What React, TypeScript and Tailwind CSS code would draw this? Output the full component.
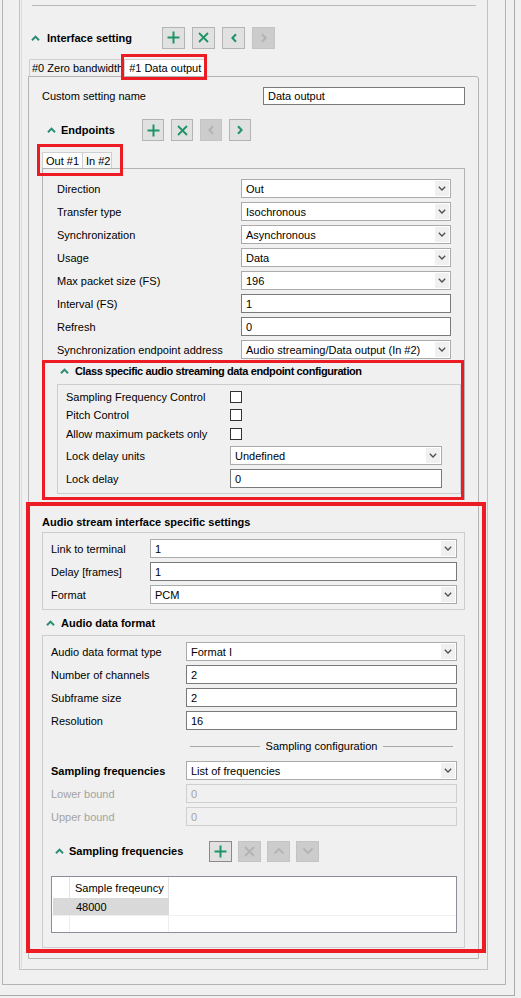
import React from "react";

// green used by tool button glyphs and collapse carets
const GREEN = "#1f9468";

const Caret = () => (
  <svg width="9" height="6" viewBox="0 0 9 6" className="shrink-0">
    <path d="M1 5.2 L4.5 1.6 L8 5.2" fill="none" stroke="#2a8c73" strokeWidth="2" />
  </svg>
);

type IconName = "plus" | "x" | "left" | "right" | "up" | "down";

const Glyph = ({ name, color }: { name: IconName; color: string }) => {
  if (name === "plus")
    return (
      <svg width="13" height="13" viewBox="0 0 13 13">
        <path d="M6.5 0.5v12M0.5 6.5h12" stroke={color} strokeWidth="2" />
      </svg>
    );
  if (name === "x")
    return (
      <svg width="11" height="11" viewBox="0 0 11 11">
        <path d="M1 1l9 9M10 1l-9 9" stroke={color} strokeWidth="1.8" />
      </svg>
    );
  if (name === "left")
    return (
      <svg width="8" height="10" viewBox="0 0 8 10">
        <path d="M6 1.2L2.4 5L6 8.8" fill="none" stroke={color} strokeWidth="2" />
      </svg>
    );
  if (name === "right")
    return (
      <svg width="8" height="10" viewBox="0 0 8 10">
        <path d="M2 1.2L5.6 5L2 8.8" fill="none" stroke={color} strokeWidth="2" />
      </svg>
    );
  if (name === "up")
    return (
      <svg width="12" height="8" viewBox="0 0 12 8">
        <path d="M1.5 6.5L6 2L10.5 6.5" fill="none" stroke={color} strokeWidth="1.8" />
      </svg>
    );
  return (
    <svg width="12" height="8" viewBox="0 0 12 8">
      <path d="M1.5 1.5L6 6L10.5 1.5" fill="none" stroke={color} strokeWidth="1.8" />
    </svg>
  );
};

interface toolProps {
  icon: IconName;
  disabled?: boolean;
  focused?: boolean;
  size: string; //w/h classes
}

const ToolButton = ({ icon, disabled, focused, size }: toolProps) => (
  <div
    className={
      size +
      " flex items-center justify-center border " +
      (disabled
        ? "border-[#c4c4c4] bg-[#cccccc]"
        : focused
        ? "border-[#8a8a8a] bg-[#e1e1e1]"
        : "border-[#b4b4b4] bg-[#e1e1e1]")
    }
  >
    <Glyph name={icon} color={disabled ? "#b3b3b3" : GREEN} />
  </div>
);

const Select = ({ value }: { value: string }) => (
  <div className="flex h-full flex-1 items-center border border-[#ababab] bg-white">
    <span className="flex-1 truncate pl-[4px]">{value}</span>
    <div className="mr-[1px] flex h-[15px] w-[14px] items-center justify-center bg-[#f0f0f0]">
      <svg width="8" height="5" viewBox="0 0 8 5">
        <path d="M0.8 0.8L4 4L7.2 0.8" fill="none" stroke="#4d4d4d" strokeWidth="1.3" />
      </svg>
    </div>
  </div>
);

const Field = ({ value, disabled }: { value: string; disabled?: boolean }) => (
  <div
    className={
      "flex h-full flex-1 items-center border pl-[4px] " +
      (disabled ? "border-[#cfcfcf] bg-[#f0f0f0] text-[#a3a3a3]" : "border-[#7a7a7a] bg-white")
    }
  >
    {value}
  </div>
);

const Checkbox = () => <div className="h-[12px] w-[12px] border border-[#333333] bg-white" />;

interface rowProps {
  label: string;
  labelW: string;
  children: React.ReactNode;
  bold?: boolean;
  muted?: boolean;
  h?: string;
}

const Row = ({ label, labelW, children, bold, muted, h }: rowProps) => (
  <div className={"flex items-center " + (h ?? "h-[19px]")}>
    <div className={labelW + " shrink-0 " + (bold ? "font-bold " : "") + (muted ? "text-[#a3a3a3]" : "")}>
      {label}
    </div>
    {children}
  </div>
);

const App = () => {
  const endpointRows: [string, string, boolean][] = [
    ["Direction", "Out", true],
    ["Transfer type", "Isochronous", true],
    ["Synchronization", "Asynchronous", true],
    ["Usage", "Data", true],
    ["Max packet size (FS)", "196", true],
    ["Interval (FS)", "1", false],
    ["Refresh", "0", false],
    ["Synchronization endpoint address", "Audio streaming/Data output (In #2)", true],
  ];

  return (
    <div className="relative h-[998px] w-[521px] overflow-hidden bg-[#f0f0f0] font-['Liberation_Sans',Arial,sans-serif] text-[11px] leading-[14px] text-black">
      <div className="h-[996px] w-[515px] border-r border-b border-[#a9a9a9]">
        <div className="ml-[2px] h-[985px] w-[504px] border-x border-b border-[#b4b4b4]">
          <div className="ml-[16px] h-[970px] w-[469px] border-x border-b border-[#c2c2c2]">
            <div className="ml-[1px] h-[968px] w-[466px] border-l border-[#dcdcdc]">
              {/* bottom edge of the group above, scrolled away */}
              <div className="ml-[10px] h-[6px] w-[444px] border-b border-[#b9b9b9]" />

              {/* Interface setting header */}
              <div className="mt-[20px] flex h-[23px] items-center pl-[9px]">
                <div className="flex w-[131px] items-center gap-[7px] font-bold">
                  <Caret />
                  Interface setting
                </div>
                <div className="flex gap-[7px]">
                  <ToolButton icon="plus" size="w-[23px] h-[22px]" />
                  <ToolButton icon="x" size="w-[23px] h-[22px]" />
                  <ToolButton icon="left" size="w-[23px] h-[22px]" />
                  <ToolButton icon="right" disabled size="w-[23px] h-[22px]" />
                </div>
              </div>

              {/* interface tabs */}
              <div className="ml-[6px] mt-[10px] w-[451px]">
                <div className="flex h-[17px] items-end pl-[1px]">
                  <div className="flex h-[17px] items-center rounded-tl-[2px] border-t border-l border-[#cfcfcf] bg-[#f0f0f0] pl-[2px] pr-[1px]">
                    #0 Zero bandwidth
                  </div>
                  <div className="flex h-[17px] items-center border-x border-t border-[#cfcfcf] bg-white px-[4px]">
                    #1 Data output
                  </div>
                </div>
                <div className="h-[883px] rounded-tr-[3px] border border-[#b4b4b4] px-[13px] pt-[10px]">
                  <div className="flex h-[18px] items-center justify-between">
                    <span>Custom setting name</span>
                    <div className="flex h-[18px] w-[202px]">
                      <Field value="Data output" />
                    </div>
                  </div>

                  {/* Endpoints header */}
                  <div className="mt-[14px] flex h-[22px] items-center pl-[5px]">
                    <div className="flex w-[95px] items-center gap-[5px] font-bold">
                      <Caret />
                      Endpoints
                    </div>
                    <div className="flex gap-[7px]">
                      <ToolButton icon="plus" size="w-[22px] h-[22px]" />
                      <ToolButton icon="x" size="w-[22px] h-[22px]" />
                      <ToolButton icon="left" disabled size="w-[22px] h-[22px]" />
                      <ToolButton icon="right" size="w-[22px] h-[22px]" />
                    </div>
                  </div>

                  {/* endpoint tabs */}
                  <div className="mt-[11px]">
                    <div className="flex h-[16px] items-end">
                      <div className="flex h-[16px] w-[40px] items-center border-t border-l border-[#cfcfcf] bg-white pl-[3px]">
                        Out #1
                      </div>
                      <div className="flex h-[16px] w-[30px] items-center border-x border-t border-[#cfcfcf] bg-[#f7f7f7] pl-[3px]">
                        In #2
                      </div>
                    </div>
                    <div className="h-[332px] border border-[#b4b4b4] pl-[14px] pr-[13px] pt-[10px]">
                      <div className="flex flex-col gap-[4px]">
                        {endpointRows.map(([label, value, isSelect], i) => (
                          <Row key={i} label={label} labelW="w-[184px]">
                            {isSelect ? <Select value={value} /> : <Field value={value} />}
                          </Row>
                        ))}
                      </div>

                      <div className="mt-[4px] flex h-[16px] items-center gap-[6px] pl-[3px] font-bold tracking-[-0.4px]">
                        <Caret />
                        Class specific audio streaming data endpoint configuration
                      </div>
                      <div className="mt-[5px] h-[110px] w-[404px] border border-[#cdcdcd] pl-[8px] pt-[3px]">
                        <Row label="Sampling Frequency Control" labelW="w-[164px]" h="h-[18px]">
                          <Checkbox />
                        </Row>
                        <Row label="Pitch Control" labelW="w-[164px]" h="h-[18px]">
                          <Checkbox />
                        </Row>
                        <Row label="Allow maximum packets only" labelW="w-[164px]">
                          <Checkbox />
                        </Row>
                        <div className="mt-[3px] w-[376px]">
                          <Row label="Lock delay units" labelW="w-[164px]">
                            <Select value="Undefined" />
                          </Row>
                        </div>
                        <div className="mt-[4px] w-[376px]">
                          <Row label="Lock delay" labelW="w-[164px]">
                            <Field value="0" />
                          </Row>
                        </div>
                      </div>
                    </div>
                  </div>

                  {/* Audio stream settings */}
                  <div className="mt-[14px] flex h-[16px] items-center font-bold">
                    Audio stream interface specific settings
                  </div>
                  <div className="mt-[2px] flex h-[78px] flex-col gap-[4px] border border-[#cdcdcd] pl-[8px] pr-[7px] pt-[6px]">
                    <Row label="Link to terminal" labelW="w-[99px]">
                      <Select value="1" />
                    </Row>
                    <Row label="Delay [frames]" labelW="w-[99px]">
                      <Field value="1" />
                    </Row>
                    <Row label="Format" labelW="w-[99px]">
                      <Select value="PCM" />
                    </Row>
                  </div>

                  <div className="mt-[5px] flex h-[16px] items-center gap-[6px] pl-[4px] font-bold">
                    <Caret />
                    Audio data format
                  </div>
                  <div className="mt-[4px] h-[313px] border border-[#cdcdcd] pl-[8px] pr-[7px] pt-[6px]">
                    <div className="flex flex-col gap-[4px]">
                      <Row label="Audio data format type" labelW="w-[135px]">
                        <Select value="Format I" />
                      </Row>
                      <Row label="Number of channels" labelW="w-[135px]">
                        <Field value="2" />
                      </Row>
                      <Row label="Subframe size" labelW="w-[135px]">
                        <Field value="2" />
                      </Row>
                      <Row label="Resolution" labelW="w-[135px]">
                        <Field value="16" />
                      </Row>
                    </div>

                    <div className="mt-[8px] flex h-[16px] items-center">
                      <div className="w-[135px] shrink-0" />
                      <div className="flex flex-1 items-center px-[4px]">
                        <div className="h-0 flex-1 border-t border-[#a8a8a8]" />
                        <span className="mx-[6px]">Sampling configuration</span>
                        <div className="h-0 flex-1 border-t border-[#a8a8a8]" />
                      </div>
                    </div>

                    <div className="mt-[7px] flex flex-col gap-[4px]">
                      <Row label="Sampling frequencies" labelW="w-[135px]" bold>
                        <Select value="List of frequencies" />
                      </Row>
                      <Row label="Lower bound" labelW="w-[135px]" muted>
                        <Field value="0" disabled />
                      </Row>
                      <Row label="Upper bound" labelW="w-[135px]" muted>
                        <Field value="0" disabled />
                      </Row>
                    </div>

                    <div className="mt-[14px] flex h-[22px] items-center pl-[4px]">
                      <div className="flex w-[154px] items-center gap-[5px] font-bold">
                        <Caret />
                        Sampling frequencies
                      </div>
                      <div className="flex gap-[6px]">
                        <ToolButton icon="plus" focused size="w-[23px] h-[21px]" />
                        <ToolButton icon="x" disabled size="w-[23px] h-[21px]" />
                        <ToolButton icon="up" disabled size="w-[23px] h-[21px]" />
                        <ToolButton icon="down" disabled size="w-[23px] h-[21px]" />
                      </div>
                    </div>

                    {/* frequency table */}
                    <div className="mt-[14px] h-[57px] border border-[#8a8f97] bg-white">
                      <div className="flex h-[21px]">
                        <div className="w-[18px] border-r border-[#e3e3e3]" />
                        <div className="flex w-[99px] items-center border-r border-[#e3e3e3] pl-[5px]">
                          Sample freqeuncy
                        </div>
                      </div>
                      <div className="flex h-[17px]">
                        <div className="ml-[1px] flex w-[116px] items-center bg-[#d9d9d9] pl-[23px]">48000</div>
                      </div>
                      <div className="flex h-[17px] border-t border-[#efefef]">
                        <div className="w-[18px] border-r border-[#eeeeee]" />
                        <div className="w-[99px] border-r border-[#eeeeee]" />
                      </div>
                    </div>
                  </div>
                </div>
              </div>
            </div>
          </div>
        </div>
      </div>

      {/* red annotation frames drawn over the screenshot */}
      <div className="absolute left-[121px] top-[54px] h-[26px] w-[86px] border-[3px] border-[#ed1c24]" />
      <div className="absolute left-[37px] top-[144px] h-[32px] w-[86px] border-[3px] border-[#ed1c24]" />
      <div className="absolute left-[42px] top-[360px] h-[140px] w-[422px] border-[3px] border-[#ed1c24]" />
      <div className="absolute left-[26px] top-[502px] h-[451px] w-[460px] border-[4px] border-[#ed1c24]" />
    </div>
  );
};

export default App;
